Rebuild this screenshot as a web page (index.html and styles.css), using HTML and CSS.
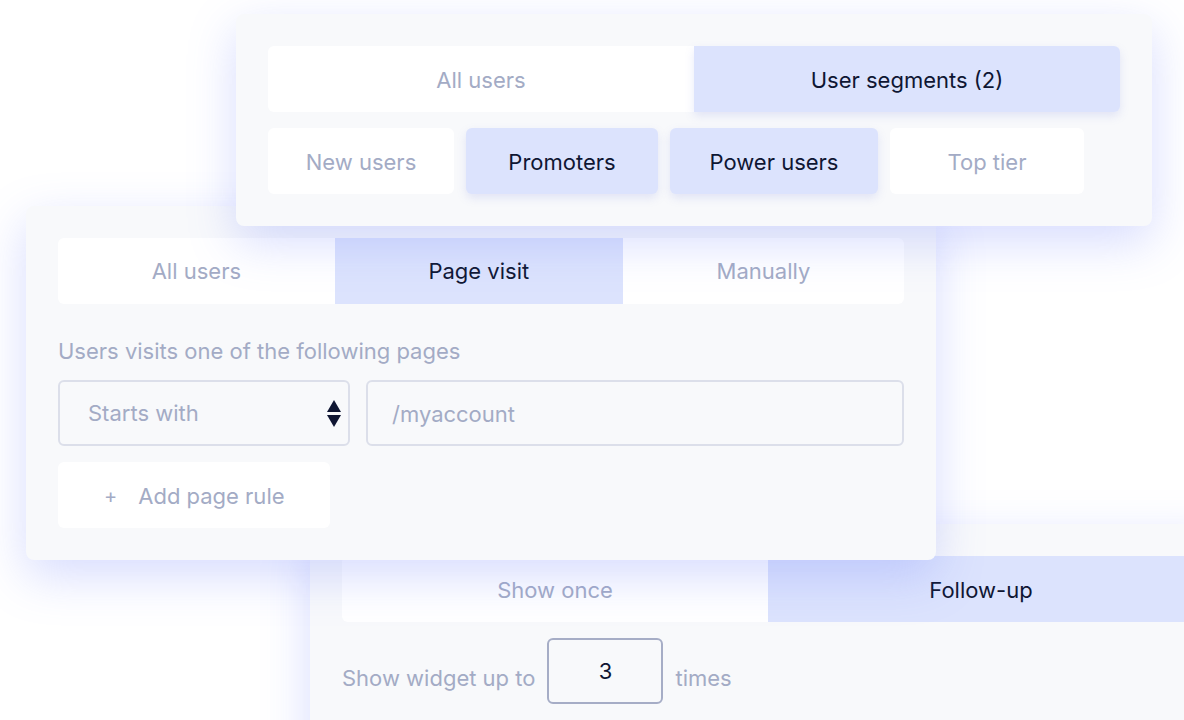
FILE: index.html
```html
<!DOCTYPE html>
<html lang="en">
<head>
  <meta charset="UTF-8" />
  <title>Targeting</title>
  <link rel="stylesheet" href="styles.css">
</head>
<body>
  <div class="canvas">

    <!-- frequency -->
    <div class="card card-freq">
      <div class="tabs tabs-even">
        <div class="tab">Show once</div>
        <div class="tab active">Follow-up</div>
      </div>
      <div class="freq-row">
        <span>Show widget up to</span>
        <div class="count-box">3</div>
        <span>times</span>
      </div>
    </div>

    <!-- page rules -->
    <div class="card card-pages">
      <div class="tabs">
        <div class="tab">All users</div>
        <div class="tab active flat">Page visit</div>
        <div class="tab">Manually</div>
      </div>
      <div class="field-label">Users visits one of the following pages</div>
      <div class="rule-row">
        <div class="select">
          <span>Starts with</span>
          <svg class="updown" width="14" height="27" viewBox="0 0 14 27">
            <path d="M7 0 L14 12 L0 12 Z" fill="#0f1633"/>
            <path d="M0 15 L14 15 L7 27 Z" fill="#0f1633"/>
          </svg>
        </div>
        <div class="text-input">/myaccount</div>
      </div>
      <div class="add-rule"><span class="plus">+</span>Add page rule</div>
    </div>

    <!-- audience -->
    <div class="card card-audience">
      <div class="tabs tabs-even">
        <div class="tab">All users</div>
        <div class="tab active raised">User segments (2)</div>
      </div>
      <div class="chips">
        <div class="chip" style="width: 186px">New users</div>
        <div class="chip on" style="width: 192px">Promoters</div>
        <div class="chip on" style="width: 208px">Power users</div>
        <div class="chip" style="width: 194px">Top tier</div>
      </div>
    </div>

  </div>
</body>
</html>
```

FILE: styles.css
```css
html, body {
  margin: 0;
  padding: 0;
  background: #fff;
  font-family: Inter, "Noto Sans", sans-serif;
  font-size: 22px;
  color: #a3abc5;
  overflow: hidden;
}

/* free canvas, the cards overlap each other */
.canvas {
  position: relative;
  width: 1184px;
  height: 720px;
  overflow: hidden;
}

.card {
  position: absolute;
  box-sizing: border-box;
  padding: 32px;
  background: #f8f9fb;
  border-radius: 8px;
  box-shadow: 0 16px 48px rgba(110, 130, 250, 0.28);
}

.card-audience {
  top: 14px; left: 236px;
  width: 916px; height: 212px;
  z-index: 3;
}
.card-pages {
  top: 206px; left: 26px;
  width: 910px; height: 354px;
  z-index: 2;
}
.card-freq {
  top: 524px; left: 310px;
  width: 916px; height: 240px;
  z-index: 1;
}

/* tab strip */
.tabs {
  display: flex;
  height: 66px;
  background: #fff;
  border-radius: 6px;
}
.tab {
  flex: 1 1 auto;
  display: flex;
  align-items: center;
  justify-content: center;
  padding-top: 2px;
}
.card-pages .tab { padding-top: 0; }
.tabs-even .tab { flex: 1 1 0; }
.tab.active {
  background: #dce3fd;
  color: #0f1633;
  border-radius: 0 6px 6px 0;
}
.tab.active.flat { border-radius: 0; }
.tab.active.raised { box-shadow: 0 4px 10px rgba(120, 135, 220, 0.18); }

/* segment chips */
.chips {
  display: flex;
  gap: 12px;
  margin-top: 16px;
}
.chip {
  height: 66px;
  display: flex;
  align-items: center;
  justify-content: center;
  padding-top: 2px;
  box-sizing: border-box;
  background: #fff;
  border-radius: 6px;
}
.chip.on {
  background: #dce3fd;
  color: #0f1633;
  box-shadow: 0 4px 10px rgba(120, 135, 220, 0.18);
}

/* page rules */
.field-label {
  margin-top: 32px;
  line-height: 30px;
}
.rule-row {
  display: flex;
  gap: 16px;
  margin-top: 14px;
}
.select, .text-input {
  box-sizing: border-box;
  height: 66px;
  border: 2px solid #dcdfea;
  border-radius: 6px;
  display: flex;
  align-items: center;
  padding-top: 2px;
}
.select {
  width: 292px;
  padding: 0 7px 0 28px;
  justify-content: space-between;
}
.text-input {
  flex: 1;
  padding-left: 24px;
}
.add-rule {
  display: flex;
  align-items: center;
  width: 272px;
  height: 66px;
  box-sizing: border-box;
  padding: 2px 0 0 46px;
  margin-top: 16px;
  background: #fff;
  border-radius: 6px;
}
.plus {
  font-size: 20px;
  margin-right: 21px;
}

/* frequency */
.freq-row {
  display: flex;
  align-items: center;
  gap: 12px;
  margin-top: 16px;
}
.freq-row span { padding-top: 14px; }
.count-box {
  box-sizing: border-box;
  width: 116px;
  height: 66px;
  border: 2px solid #a6adc6;
  border-radius: 6px;
  display: flex;
  align-items: center;
  justify-content: center;
  color: #0f1633;
}
```
